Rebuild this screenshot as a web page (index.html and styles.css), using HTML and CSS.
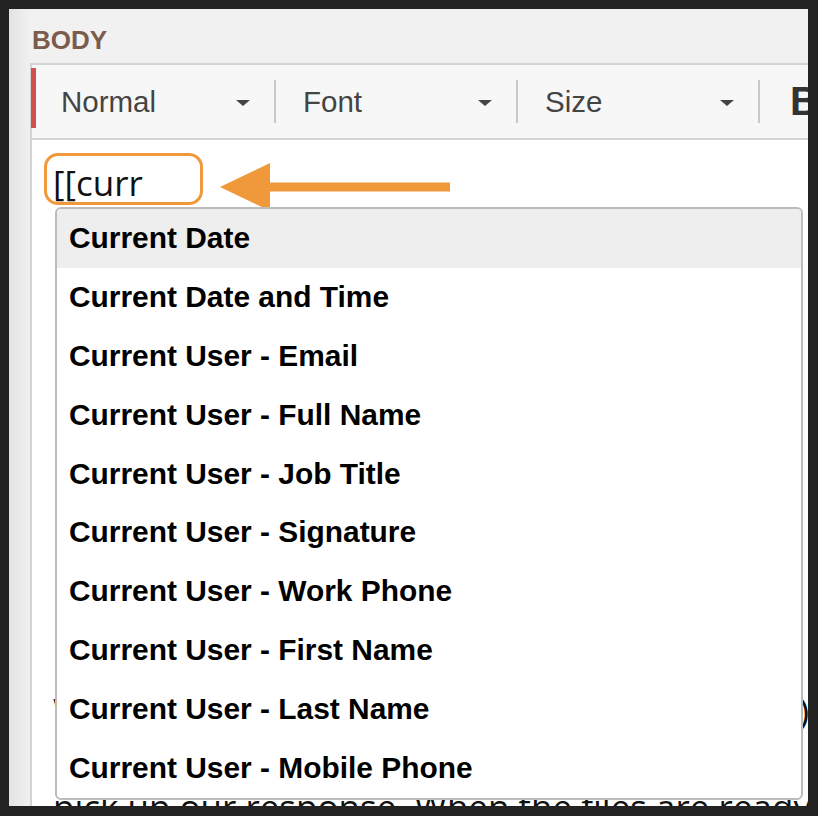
FILE: index.html
```html
<!DOCTYPE html>
<html lang="en">

<head>
    <meta charset="UTF-8">
    <meta name="viewport" content="width=device-width, initial-scale=1.0">
    <title>Body editor - merge fields</title>
    <link rel="stylesheet" href="styles.css">
</head>

<body>

<div class="panel">
    <div class="field-label">BODY</div>

    <div class="editor">
        <div class="toolbar">
            <span class="flag"></span>
            <div class="picker picker-first">
                <span class="picker-label">Normal</span>
                <span class="caret"></span>
            </div>
            <span class="sep"></span>
            <div class="picker">
                <span class="picker-label">Font</span>
                <span class="caret"></span>
            </div>
            <span class="sep"></span>
            <div class="picker">
                <span class="picker-label">Size</span>
                <span class="caret"></span>
            </div>
            <span class="sep"></span>
            <span class="tool-bold">B</span>
        </div>

        <div class="content">
            <div class="line">[[curr</div>
            <div class="line">&nbsp;</div>
            <div class="line">&nbsp;</div>
            <div class="line">&nbsp;</div>
            <div class="line">&nbsp;</div>
            <div class="line">&nbsp;</div>
            <div class="line">&nbsp;</div>
            <div class="line">&nbsp;</div>
            <div class="line">&nbsp;</div>
            <div class="line">&nbsp;</div>
            <div class="line">&nbsp;</div>
            <div class="line">We will email the files to you today (see below)</div>
            <div class="line">&nbsp;</div>
            <div class="line">pick up our response. When the files are ready</div>

            <!-- annotation: box + arrow -->
            <div class="callout"></div>
            <svg class="arrow" width="240" height="56" viewBox="0 0 240 56">
                <polygon points="2,27 52,3 52,51" fill="#f0993a" />
                <rect x="50" y="22.5" width="182" height="9" fill="#f0993a" />
            </svg>

            <!-- Merge field suggestions -->
            <ul class="suggest">
                <li class="active">Current Date</li>
                <li>Current Date and Time</li>
                <li>Current User - Email</li>
                <li>Current User - Full Name</li>
                <li>Current User - Job Title</li>
                <li>Current User - Signature</li>
                <li>Current User - Work Phone</li>
                <li>Current User - First Name</li>
                <li>Current User - Last Name</li>
                <li>Current User - Mobile Phone</li>
            </ul>
        </div>
    </div>
</div>

</body>

</html>
```

FILE: styles.css
```css
body {
    margin: 0;
    background-color: #222222;
    font-family: 'Liberation Sans', Arial, sans-serif;
}

.panel {
    margin: 9px 0 0 9px;
    width: 799px;
    height: 797px;
    overflow: hidden;
    background: linear-gradient(to right, #e3e3e3, #f1f1f1 22px);
}

.field-label {
    padding: 16px 0 0 23px;
    line-height: 30px;
    font-size: 26px;
    font-weight: bold;
    color: #7b5b4c;
    margin-bottom: 8px;
}

.editor {
    margin-left: 21px;
    width: 830px;
    height: 800px;
    border: 2px solid #d4d4d4;
    background-color: white;
}

.toolbar {
    display: flex;
    align-items: center;
    height: 73px;
    background-color: #f7f7f7;
    border-bottom: 2px solid #d4d4d4;
    color: #444;
    font-size: 29.5px;
}

.flag {
    align-self: flex-start;
    margin: 3px 0 0 -1px;
    width: 5px;
    height: 60px;
    background-color: #d0504f;
}

.picker {
    display: flex;
    align-items: center;
    padding: 0 24px 0 27px;
}

.picker-first {
    padding-left: 25px;
}

.picker-label {
    width: 175px;
}

.caret {
    margin-top: 3px;
    width: 0;
    height: 0;
    border-left: 7px solid transparent;
    border-right: 7px solid transparent;
    border-top: 6px solid #444;
}

.sep {
    width: 2px;
    height: 43px;
    background-color: #c8c8c8;
}

.tool-bold {
    padding-left: 30px;
    font-size: 40px;
    font-weight: bold;
    color: #333;
}

.content {
    position: relative;
    padding: 19px 0 0 21px;
    font-family: 'Open Sans', sans-serif;
    font-size: 35px;
    line-height: 48px;
    color: #111;
}

.line {
    white-space: nowrap;
}

.callout {
    position: absolute;
    left: 12px;
    top: 13px;
    width: 159px;
    height: 52px;
    box-sizing: border-box;
    border: 3px solid #f0993a;
    border-radius: 14px;
}

.arrow {
    position: absolute;
    left: 186px;
    top: 20px;
}

.suggest {
    position: absolute;
    left: 23px;
    top: 67px;
    width: 748px;
    margin: 0;
    padding: 0;
    list-style: none;
    box-sizing: border-box;
    border: 2px solid #bcbcbc;
    border-radius: 6px;
    background-color: white;
    overflow: hidden;
    font-family: 'Liberation Sans', Arial, sans-serif;
    font-size: 29.9px;
    font-weight: bold;
    color: #000;
}

.suggest li {
    height: 58.9px;
    line-height: 58.9px;
    padding-left: 12px;
}

.suggest .active {
    background-color: #eeeeee;
}
```
